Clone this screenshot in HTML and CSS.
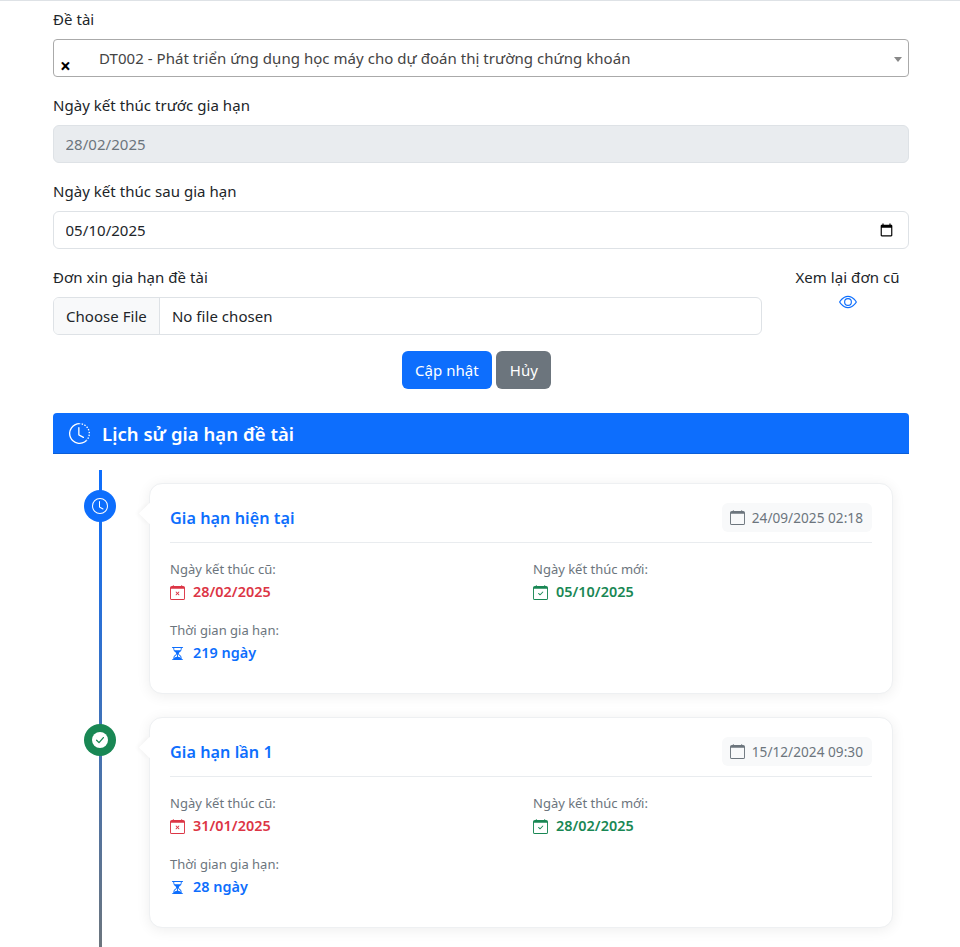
FILE: index.html
```html
<!DOCTYPE html>
<html lang="vi">
	<head>
		<meta charset="utf-8">
		<title>Gia hạn đề tài</title>
		<link rel="stylesheet" href="styles.css">
	</head>
	<body>
		<svg class="icon-defs" xmlns="http://www.w3.org/2000/svg">
			<symbol id="i-calendar" viewBox="0 0 16 16">
				<path d="M3.5 0a.5.5 0 0 1 .5.5V1h8V.5a.5.5 0 0 1 1 0V1h1a2 2 0 0 1 2 2v11a2 2 0 0 1-2 2H2a2 2 0 0 1-2-2V3a2 2 0 0 1 2-2h1V.5a.5.5 0 0 1 .5-.5zM1 4v10a1 1 0 0 0 1 1h12a1 1 0 0 0 1-1V4H1z"/>
			</symbol>
			<symbol id="i-calendar-x" viewBox="0 0 16 16">
				<path d="M6.146 7.146a.5.5 0 0 1 .708 0L8 8.293l1.146-1.147a.5.5 0 1 1 .708.708L8.707 9l1.147 1.146a.5.5 0 0 1-.708.708L8 9.707l-1.146 1.147a.5.5 0 0 1-.708-.708L7.293 9 6.146 7.854a.5.5 0 0 1 0-.708z"/>
				<path d="M3.5 0a.5.5 0 0 1 .5.5V1h8V.5a.5.5 0 0 1 1 0V1h1a2 2 0 0 1 2 2v11a2 2 0 0 1-2 2H2a2 2 0 0 1-2-2V3a2 2 0 0 1 2-2h1V.5a.5.5 0 0 1 .5-.5zM1 4v10a1 1 0 0 0 1 1h12a1 1 0 0 0 1-1V4H1z"/>
			</symbol>
			<symbol id="i-calendar-check" viewBox="0 0 16 16">
				<path d="M10.854 7.146a.5.5 0 0 1 0 .708l-3 3a.5.5 0 0 1-.708 0l-1.5-1.5a.5.5 0 1 1 .708-.708L7.5 9.793l2.646-2.647a.5.5 0 0 1 .708 0z"/>
				<path d="M3.5 0a.5.5 0 0 1 .5.5V1h8V.5a.5.5 0 0 1 1 0V1h1a2 2 0 0 1 2 2v11a2 2 0 0 1-2 2H2a2 2 0 0 1-2-2V3a2 2 0 0 1 2-2h1V.5a.5.5 0 0 1 .5-.5zM1 4v10a1 1 0 0 0 1 1h12a1 1 0 0 0 1-1V4H1z"/>
			</symbol>
			<symbol id="i-hourglass" viewBox="0 0 16 16">
				<path d="M2.5 15a.5.5 0 1 1 0-1h1v-1a4.5 4.5 0 0 1 2.557-4.06c.29-.139.443-.377.443-.59v-.7c0-.213-.154-.451-.443-.59A4.5 4.5 0 0 1 3.5 3V2h-1a.5.5 0 0 1 0-1h11a.5.5 0 0 1 0 1h-1v1a4.5 4.5 0 0 1-2.557 4.06c-.29.139-.443.377-.443.59v.7c0 .213.154.451.443.59A4.5 4.5 0 0 1 12.5 13v1h1a.5.5 0 0 1 0 1h-11zm2-13v1c0 .537.12 1.045.337 1.5h6.326c.216-.455.337-.963.337-1.5V2h-7zm3 6.35c0 .701-.478 1.236-1.011 1.492A3.5 3.5 0 0 0 4.5 13s.866-1.299 3-1.48V8.35zm1 0v3.17c2.134.181 3 1.48 3 1.48a3.5 3.5 0 0 0-1.989-3.158C8.978 9.586 8.5 9.052 8.5 8.351z"/>
			</symbol>
			<symbol id="i-clock" viewBox="0 0 16 16">
				<path d="M8 3.5a.5.5 0 0 0-1 0V9a.5.5 0 0 0 .252.434l3.5 2a.5.5 0 0 0 .496-.868L8 8.71V3.5z"/>
				<path d="M8 16A8 8 0 1 0 8 0a8 8 0 0 0 0 16zm7-8A7 7 0 1 1 1 8a7 7 0 0 1 14 0z"/>
			</symbol>
			<symbol id="i-check-disc" viewBox="0 0 16 16">
				<circle cx="8" cy="8" r="8"/>
				<polyline points="4.6,8.3 7,10.6 11.4,5.6" fill="none" stroke="#198754" stroke-width="1.3" stroke-linecap="round" stroke-linejoin="round"/>
			</symbol>
		</svg>

		<main class="page">
			<form class="form">
				<div class="field">
					<label class="label">Đề tài</label>
					<div class="select-box">
						<span class="select-clear">×</span>
						<span class="select-text">DT002 - Phát triển ứng dụng học máy cho dự đoán thị trường chứng khoán</span>
						<span class="select-arrow"></span>
					</div>
				</div>
				<div class="field">
					<label class="label">Ngày kết thúc trước gia hạn</label>
					<input class="control" type="text" value="28/02/2025" disabled>
				</div>
				<div class="field">
					<label class="label">Ngày kết thúc sau gia hạn</label>
					<input class="control" type="date" value="2025-05-10">
				</div>
				<div class="file-row">
					<div class="file-col">
						<label class="label">Đơn xin gia hạn đề tài</label>
						<input class="control file-input" type="file">
					</div>
					<div class="old-col">
						<span class="old-title">Xem lại đơn cũ</span>
						<svg class="eye" viewBox="0 0 16 16" fill="currentColor">
							<path d="M16 8s-3-5.5-8-5.5S0 8 0 8s3 5.5 8 5.5S16 8 16 8zM1.173 8a13.133 13.133 0 0 1 1.66-2.043C4.12 4.668 5.88 3.5 8 3.5c2.12 0 3.879 1.168 5.168 2.457A13.133 13.133 0 0 1 14.828 8c-.058.087-.122.183-.195.288-.335.48-.83 1.12-1.465 1.755C11.879 11.332 10.119 12.5 8 12.5c-2.12 0-3.879-1.168-5.168-2.457A13.134 13.134 0 0 1 1.172 8z"/>
							<path d="M8 5.5a2.5 2.5 0 1 0 0 5 2.5 2.5 0 0 0 0-5zM4.5 8a3.5 3.5 0 1 1 7 0 3.5 3.5 0 0 1-7 0z"/>
						</svg>
					</div>
				</div>
				<div class="buttons">
					<button class="btn btn-blue" type="button">Cập nhật</button>
					<button class="btn btn-gray" type="button">Hủy</button>
				</div>
			</form>

			<section class="history">
				<h2 class="history-head">
					<svg class="history-icon" viewBox="0 0 16 16" fill="currentColor">
						<path d="M8.515 1.019A7 7 0 0 0 8 1V0a8 8 0 0 1 .589.022l-.074.997zm2.004.45a7.003 7.003 0 0 0-.985-.299l.219-.976c.383.086.76.2 1.126.342l-.36.933zm1.37.71a7.01 7.01 0 0 0-.439-.27l.493-.87a8.025 8.025 0 0 1 .979.654l-.615.789a6.996 6.996 0 0 0-.418-.302zm1.834 1.79a6.99 6.99 0 0 0-.653-.796l.724-.69c.27.285.52.59.747.91l-.818.576zm.744 1.352a7.08 7.08 0 0 0-.214-.468l.893-.45a7.976 7.976 0 0 1 .45 1.088l-.95.313a7.023 7.023 0 0 0-.179-.483zm.53 2.507a6.991 6.991 0 0 0-.1-1.025l.985-.17c.067.386.106.778.116 1.17l-1 .025zm-.131 1.538c.033-.17.06-.339.081-.51l.993.123a7.957 7.957 0 0 1-.23 1.155l-.964-.267c.046-.165.086-.332.12-.501zm-.952 2.379c.184-.29.346-.594.486-.908l.914.405c-.16.36-.345.706-.555 1.038l-.845-.535zm-.964 1.205c.122-.122.239-.248.35-.378l.758.653a8.073 8.073 0 0 1-.401.432l-.707-.707z"/>
						<path d="M8 1a7 7 0 1 0 4.95 11.95l.707.707A8.001 8.001 0 1 1 8 0v1z"/>
						<path d="M7.5 3a.5.5 0 0 1 .5.5v5.21l3.248 1.856a.5.5 0 0 1-.496.868l-3.5-2A.5.5 0 0 1 7 9V3.5a.5.5 0 0 1 .5-.5z"/>
					</svg>
					<span class="history-text">Lịch sử gia hạn đề tài</span>
				</h2>

				<div class="timeline">
					<article class="entry">
						<span class="dot dot-blue"><svg class="dot-icon"><use href="#i-clock"/></svg></span>
						<div class="card">
							<header class="card-head">
								<h3 class="card-title">Gia hạn hiện tại</h3>
								<span class="stamp"><svg class="ico"><use href="#i-calendar"/></svg>24/09/2025 02:18</span>
							</header>
							<div class="facts">
								<div>
									<div class="fact-label">Ngày kết thúc cũ:</div>
									<div class="fact-value red"><svg class="ico"><use href="#i-calendar-x"/></svg>28/02/2025</div>
								</div>
								<div>
									<div class="fact-label">Ngày kết thúc mới:</div>
									<div class="fact-value green"><svg class="ico"><use href="#i-calendar-check"/></svg>05/10/2025</div>
								</div>
								<div>
									<div class="fact-label">Thời gian gia hạn:</div>
									<div class="fact-value blue"><svg class="ico"><use href="#i-hourglass"/></svg>219 ngày</div>
								</div>
							</div>
						</div>
					</article>

					<article class="entry">
						<span class="dot dot-green"><svg class="dot-icon"><use href="#i-check-disc"/></svg></span>
						<div class="card">
							<header class="card-head">
								<h3 class="card-title">Gia hạn lần 1</h3>
								<span class="stamp"><svg class="ico"><use href="#i-calendar"/></svg>15/12/2024 09:30</span>
							</header>
							<div class="facts">
								<div>
									<div class="fact-label">Ngày kết thúc cũ:</div>
									<div class="fact-value red"><svg class="ico"><use href="#i-calendar-x"/></svg>31/01/2025</div>
								</div>
								<div>
									<div class="fact-label">Ngày kết thúc mới:</div>
									<div class="fact-value green"><svg class="ico"><use href="#i-calendar-check"/></svg>28/02/2025</div>
								</div>
								<div>
									<div class="fact-label">Thời gian gia hạn:</div>
									<div class="fact-value blue"><svg class="ico"><use href="#i-hourglass"/></svg>28 ngày</div>
								</div>
							</div>
						</div>
					</article>
				</div>
			</section>
		</main>
	</body>
</html>
```

FILE: styles.css
```css
*{
	box-sizing:border-box;
	margin:0;
	padding:0;
}
html,body{
	height:947px;
	overflow:hidden;
}
body{
	background-color:#fff;
	color:#212529;
	font-family:"Noto Sans","Open Sans",sans-serif;
	font-size:15px;
	letter-spacing:.04px;
	line-height:24px;
	border-top:1px solid #dee2e6;
}
.icon-defs{
	display:none;
}
.page{
	padding:0 51px 0 53px;
}

/* form */
.field{
	margin-bottom:16px;
}
.label{
	display:block;
	height:24px;
	margin-top:6px;
	margin-bottom:8px;
}
.control{
	display:block;
	width:100%;
	height:38px;
	padding:6px 12px 6px 11.5px;
	border:1px solid #dee2e6;
	border-radius:6px;
	background-color:#fff;
	color:#212529;
	font:inherit;
	letter-spacing:inherit;
}
.control:disabled{
	background-color:#e9ecef;
	color:#6c757d;
	opacity:1;
}
.control::-webkit-datetime-edit,
.control::-webkit-datetime-edit-fields-wrapper,
.control::-webkit-datetime-edit-month-field,
.control::-webkit-datetime-edit-day-field,
.control::-webkit-datetime-edit-year-field{
	padding:0;
}
.select-box{
	position:relative;
	display:flex;
	align-items:center;
	height:38px;
	padding-left:45px;
	border:1px solid #aaa;
	border-radius:4px;
	color:#444;
}
.select-clear{
	position:absolute;
	left:6px;
	top:14px;
	font-size:19px;
	line-height:24px;
	font-weight:700;
	color:#000;
}
.select-arrow{
	position:absolute;
	right:6px;
	top:17px;
	border-top:5px solid #888;
	border-left:4px solid transparent;
	border-right:4px solid transparent;
}
.file-row{
	display:flex;
	gap:24px;
	margin-bottom:16px;
}
.file-col{
	flex:0 0 709px;
}
.file-col .label{
	margin-top:0;
}
.file-input{
	padding:0;
	line-height:36px;
}
.file-input::file-selector-button{
	height:36px;
	margin-right:12px;
	padding:0 12px;
	border:0;
	border-right:1px solid #dee2e6;
	background-color:#f8f9fa;
	color:#212529;
	font:inherit;
	letter-spacing:inherit;
}
.old-col{
	flex:1;
	display:flex;
	flex-direction:column;
	align-items:center;
}
.eye{
	width:18px;
	height:18px;
	margin-top:4px;
	color:#0d6efd;
}
.buttons{
	display:flex;
	justify-content:center;
	gap:4px;
	padding-right:9px;
	margin-bottom:24px;
}
.btn{
	height:38px;
	padding:0 13.5px;
	border:0;
	border-radius:6px;
	color:#fff;
	font:inherit;
	letter-spacing:inherit;
}
.btn-blue{
	background-color:#0d6efd;
}
.btn-gray{
	background-color:#6c757d;
}

/* history */
.history-head{
	display:flex;
	align-items:center;
	gap:12.5px;
	height:41px;
	padding-left:15.5px;
	border-bottom:1px solid #0b5ed7;
	border-radius:4px 4px 0 0;
	background-color:#0d6efd;
	color:#fff;
	font-size:18.5px;
	font-weight:600;
}
.history-icon{
	width:21px;
	height:21px;
}
.history-text{
	padding-top:2px;
}
.timeline{
	position:relative;
	padding:29px 16px 19px 96px;
}
.timeline::before{
	content:"";
	position:absolute;
	left:46px;
	top:16px;
	bottom:0;
	width:3px;
	background:linear-gradient(#0d6efd,#6c757d);
}
.entry{
	position:relative;
	margin-bottom:23px;
}
.entry:last-child{
	margin-bottom:0;
}
.dot{
	position:absolute;
	left:-65px;
	top:7px;
	display:flex;
	align-items:center;
	justify-content:center;
	width:32px;
	height:32px;
	border-radius:50%;
	color:#fff;
}
.dot-blue{
	background-color:#0d6efd;
}
.dot-green{
	background-color:#198754;
}
.dot-icon{
	width:16px;
	height:16px;
	fill:currentColor;
}
.card{
	position:relative;
	padding:19px 20px 28px;
	border:1px solid #eef0f2;
	border-radius:13px;
	background-color:#fff;
	box-shadow:0 2px 14px rgba(0,0,0,.07);
}
.card::before{
	content:"";
	position:absolute;
	left:-8px;
	top:22px;
	width:15px;
	height:15px;
	background-color:#fff;
	transform:rotate(45deg);
	box-shadow:-2px 2px 4px rgba(0,0,0,.03);
}
.card-head{
	display:flex;
	align-items:center;
	justify-content:space-between;
	padding-bottom:10px;
	border-bottom:1px solid #e9ecef;
}
.card-title{
	color:#0d6efd;
	font-size:16.2px;
	font-weight:600;
}
.stamp{
	display:flex;
	align-items:center;
	height:29px;
	padding:0 9px 0 8px;
	border-radius:6px;
	background-color:#f8f9fa;
	color:#6c757d;
	font-size:13.6px;
}
.stamp .ico{
	margin-right:7px;
}
.ico{
	width:15px;
	height:15px;
	fill:currentColor;
	flex:none;
}
.facts{
	display:grid;
	grid-template-columns:1fr 1fr;
	column-gap:24px;
	row-gap:15px;
	margin-top:15px;
}
.fact-label{
	color:#6c757d;
	font-size:13px;
	letter-spacing:0;
	line-height:22px;
}
.fact-value{
	display:flex;
	align-items:center;
	gap:8px;
	font-size:14.4px;
	font-weight:600;
	line-height:24px;
}
.red{
	color:#dc3545;
}
.green{
	color:#198754;
}
.blue{
	color:#0d6efd;
}
```
